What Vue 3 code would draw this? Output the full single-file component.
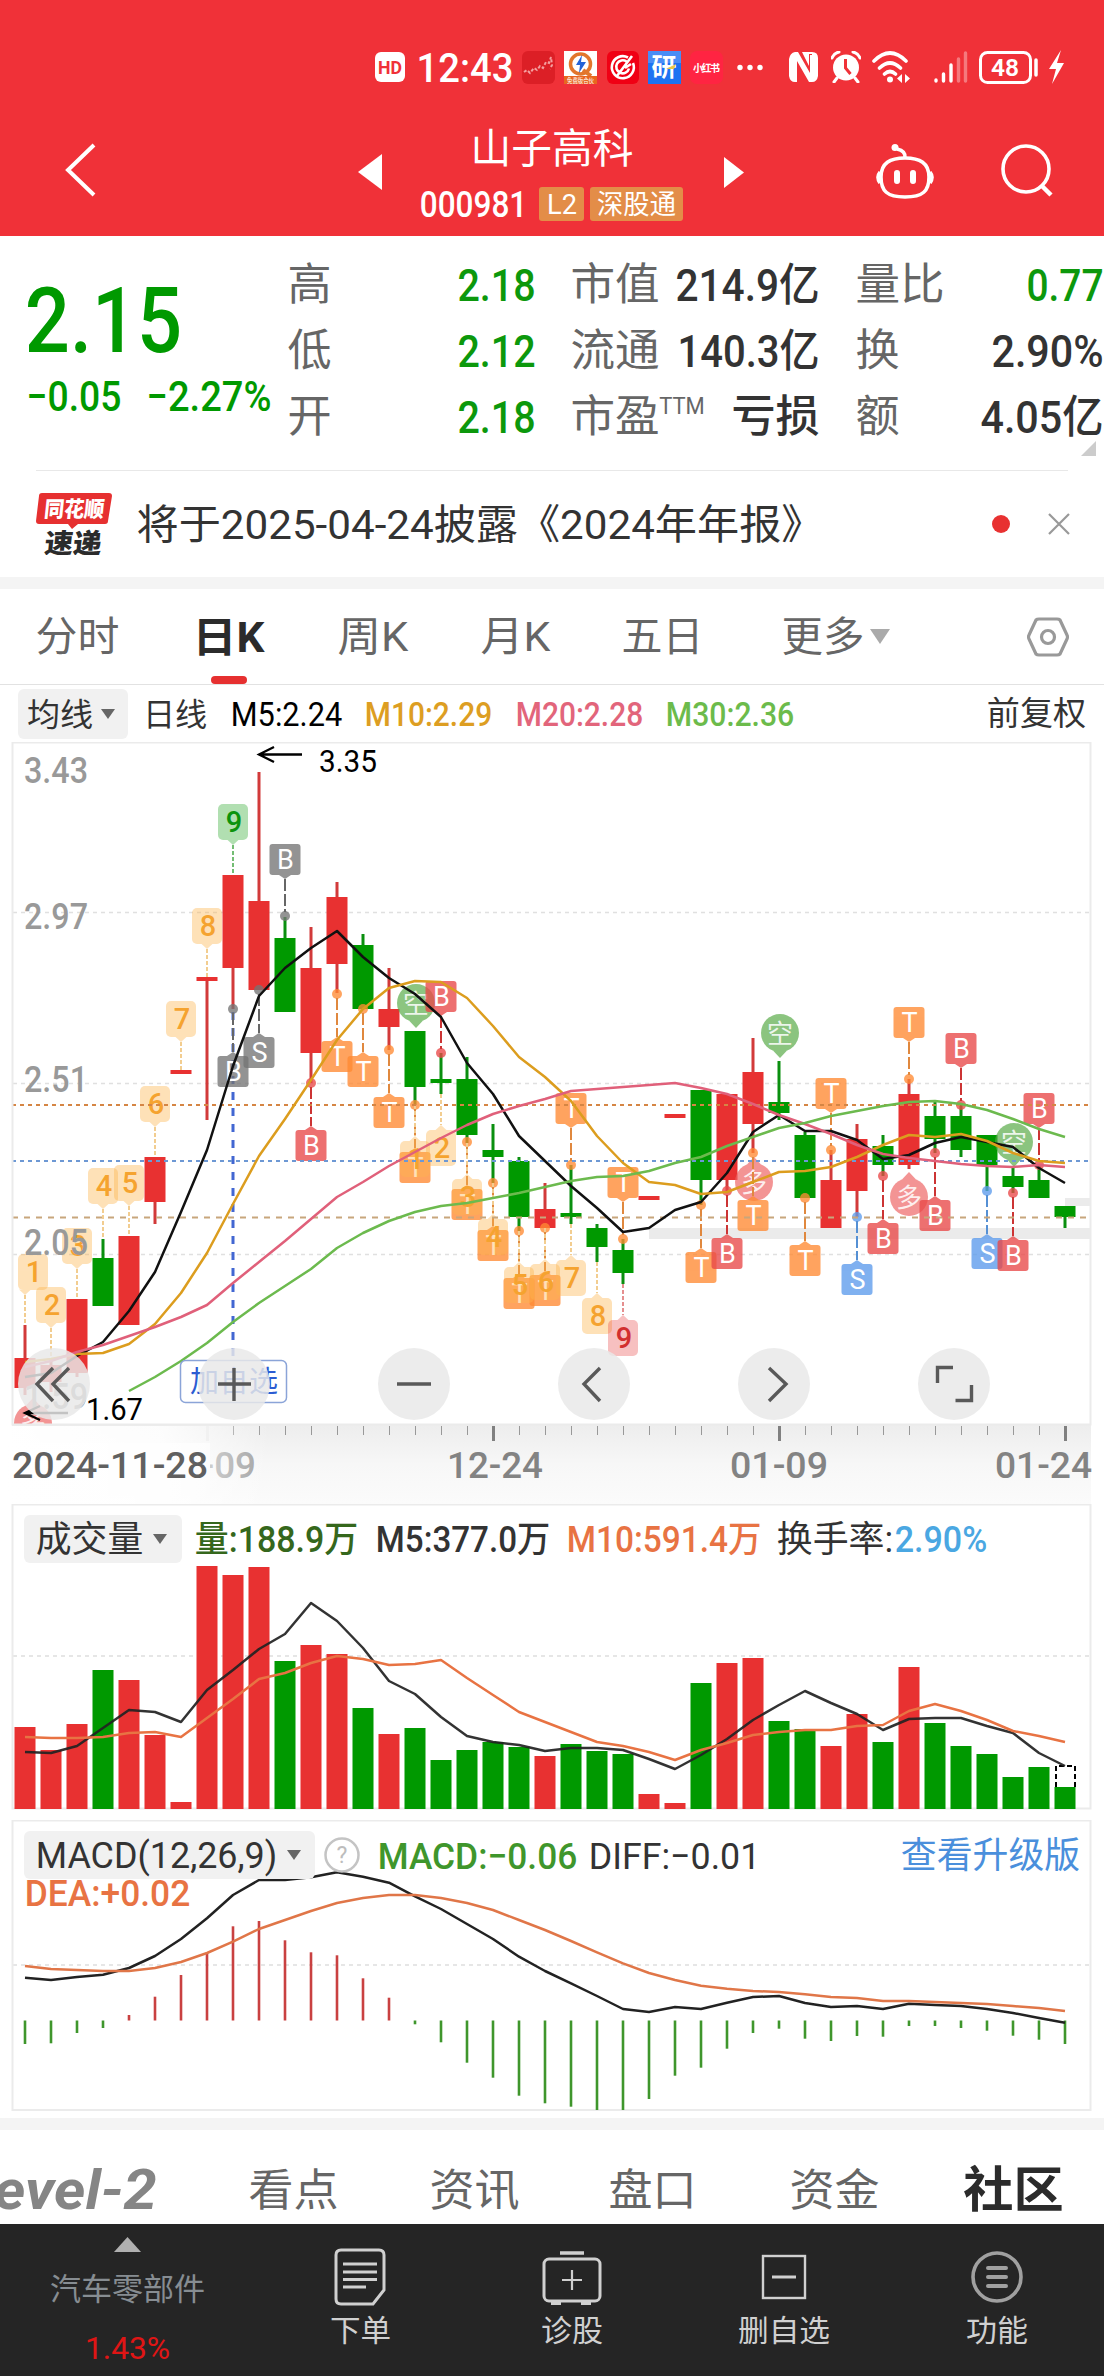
<script setup>
import { h } from 'vue'

// One line of text fitted to an exact width, like the narrow numerals of a trading app
const Fit = (props) => {
  const { t, w, s, b } = props
  return h('svg', { class: 'fit', width: w, height: s, style: { overflow: 'visible', display: 'block', flex: 'none' } }, [
    h('text', {
      x: -0.035 * s, y: 0.86 * s, 'font-size': s, 'font-weight': b || 400,
      textLength: w + 0.07 * s, lengthAdjust: 'spacingAndGlyphs', fill: 'currentColor',
    }, t),
  ])
}
Fit.props = ['t', 'w', 's', 'b']

const X = (i) => 25 + 26 * i
const poly = (arr, start = 0, f = (v) => v) => arr.map((v, i) => `${X(i + start)},${f(v)}`).join(' ')

// [rising?, bodyTop, bodyBottom, high, low]
const candles = [
  [1, 1358, 1388, 1325, 1395], [1, 1365, 1382, 1358, 1392], [1, 1299, 1373, 1299, 1377], [0, 1258, 1306, 1239, 1306],
  [1, 1236, 1325, 1236, 1325], [1, 1157, 1202, 1157, 1224], [1, 1070, 1074, 1070, 1074], [1, 977, 981, 977, 1120],
  [1, 875, 968, 875, 1009], [1, 901, 990, 772, 990], [0, 938, 1012, 917, 1012], [1, 968, 1053, 927, 1083],
  [1, 897, 964, 882, 993], [0, 945, 1009, 934, 1009], [1, 1009, 1027, 968, 1050], [0, 1031, 1087, 1031, 1105],
  [0, 1079, 1083, 1053, 1094], [0, 1079, 1135, 1057, 1143], [0, 1150, 1157, 1124, 1183], [0, 1161, 1217, 1157, 1231],
  [1, 1209, 1228, 1183, 1228], [0, 1213, 1217, 1165, 1224], [0, 1228, 1247, 1224, 1262], [0, 1250, 1273, 1239, 1284],
  [1, 1196, 1200, 1196, 1200], [1, 1114, 1118, 1114, 1118], [0, 1090, 1180, 1090, 1205], [1, 1094, 1180, 1094, 1191],
  [1, 1072, 1124, 1038, 1153], [0, 1102, 1113, 1061, 1120], [0, 1135, 1198, 1132, 1198], [1, 1180, 1228, 1150, 1228],
  [1, 1139, 1191, 1124, 1217], [0, 1146, 1165, 1135, 1176], [1, 1094, 1165, 1079, 1169], [0, 1116, 1139, 1101, 1153],
  [0, 1116, 1150, 1105, 1157], [0, 1135, 1165, 1135, 1191], [0, 1176, 1187, 1167, 1193], [0, 1180, 1198, 1166, 1198],
  [0, 1206, 1217, 1206, 1228],
]
const ma5 = [1377, 1373, 1356, 1342, 1311, 1272, 1212, 1150, 1066, 996, 968, 948, 931, 957, 978, 994, 1017, 1063, 1094, 1136, 1161, 1186, 1208, 1232, 1228, 1210, 1202, 1173, 1132, 1115, 1131, 1131, 1140, 1159, 1155, 1143, 1137, 1142, 1147, 1168, 1183]
const ma10 = [1362, 1359, 1354, 1353, 1344, 1324, 1293, 1253, 1204, 1156, 1119, 1080, 1040, 1009, 988, 981, 982, 998, 1026, 1057, 1077, 1101, 1136, 1163, 1182, 1185, 1194, 1192, 1182, 1172, 1171, 1167, 1157, 1145, 1135, 1137, 1134, 1141, 1153, 1161, 1163]
const ma20 = [1367, 1361, 1352, 1345, 1336, 1327, 1317, 1305, 1283, 1262, 1241, 1219, 1197, 1182, 1166, 1152, 1138, 1125, 1114, 1106, 1099, 1091, 1089, 1087, 1085, 1083, 1088, 1094, 1104, 1115, 1124, 1134, 1145, 1154, 1158, 1161, 1164, 1166, 1167, 1165, 1167]
const ma30 = [1391, 1377, 1361, 1343, 1322, 1303, 1286, 1269, 1248, 1233, 1221, 1212, 1206, 1203, 1198, 1193, 1187, 1181, 1177, 1176, 1171, 1163, 1157, 1146, 1137, 1128, 1123, 1116, 1111, 1106, 1102, 1101, 1104, 1110, 1119, 1129, 1137]

// sequence numbers: [column, label, anchor y, above?, box centre x]
const nums = [
  [0, 1, 1325, 1, 33], [1, 2, 1358, 1, 51], [2, 3, 1299, 1], [3, 4, 1239, 1], [4, 5, 1236, 1], [5, 6, 1157, 1], [6, 7, 1072, 1], [7, 8, 979, 1], [8, 9, 875, 1],
  [15, 1, 1105, 0], [16, 2, 1094, 0], [17, 3, 1143, 0], [18, 4, 1183, 0], [19, 5, 1231, 0], [20, 6, 1228, 0], [21, 7, 1224, 0], [22, 8, 1262, 0], [23, 9, 1284, 0],
].map(([i, t, y, up, cx]) => {
  const x = X(i), c = cx || x, top = up ? y - 71 : y + 36
  const kind = t === 9 ? (up ? 'n-green' : 'n-red') : 'n-orange'
  const tip = up
    ? `${x - 6},${top + 35.5} ${x + 6},${top + 35.5} ${x},${top + 41}`
    : `${x - 6},${top + 0.5} ${x + 6},${top + 0.5} ${x},${top - 5}`
  return { x, c, t, top, kind, tip, y1: up ? top + 41 : y, y2: up ? y : top - 5 }
})

// trade markers: [column, letter, dot y, above?, colour]
const marks = [
  [10, 'B', 916, 1, 'gray'], [8, 'B', 1009, 0, 'gray'], [9, 'S', 990, 0, 'gray'], [11, 'B', 1083, 0, 'red'],
  [12, 'T', 994, 0, 'orange'], [13, 'T', 1009, 0, 'orange'], [14, 'T', 1050, 0, 'orange'], [15, 'T', 1105, 0, 'orange'],
  [16, 'B', 1053, 1, 'red'], [17, 'T', 1142, 0, 'orange'], [18, 'T', 1183, 0, 'orange'], [19, 'T', 1231, 0, 'orange'], [20, 'T', 1228, 0, 'orange'],
  [21, 'T', 1165, 1, 'orange'], [23, 'T', 1239, 1, 'orange'], [26, 'T', 1205, 0, 'orange'], [27, 'B', 1191, 0, 'red'],
  [28, 'T', 1153, 0, 'orange'], [30, 'T', 1198, 0, 'orange'], [31, 'T', 1150, 1, 'orange'], [32, 'S', 1217, 0, 'blue'],
  [33, 'B', 1176, 0, 'red'], [34, 'T', 1079, 1, 'orange'], [35, 'B', 1153, 0, 'red'], [36, 'B', 1105, 1, 'red'],
  [37, 'S', 1191, 0, 'blue'], [38, 'B', 1193, 0, 'red'], [39, 'B', 1165, 1, 'red'],
].map(([i, t, y, up, kind]) => {
  const x = X(i), top = up ? y - 72 : y + 47
  const tip = up
    ? `${x - 6},${top + 31} ${x + 6},${top + 31} ${x},${top + 35}`
    : `${x - 6},${top} ${x + 6},${top} ${x},${top - 4}`
  return { x, t, y, top, kind, tip, y1: up ? top + 35 : y + 4, y2: up ? y - 4 : top - 4 }
})

const pins = [
  { x: 416, y: 1003, t: '空', k: 'p-green', d: 1 }, { x: 780, y: 1033, t: '空', k: 'p-green', d: 1 }, { x: 1014, y: 1142, t: '空', k: 'p-green', d: 1 },
  { x: 754, y: 1182, t: '多', k: 'p-red', d: -1 }, { x: 909, y: 1197, t: '多', k: 'p-red', d: -1 }, { x: 33, y: 1423, t: '多', k: 'p-red', d: -1 },
]
const labels = [['3.43', 783], ['2.97', 929], ['2.51', 1092], ['2.05', 1255], ['1.59', 1409]]
const ticks = Array.from({ length: 33 }, (_, k) => k + 8)
const major = [18, 29, 40]

const vols = [
  [1, 1727], [1, 1750], [1, 1724], [0, 1670], [1, 1680], [1, 1735], [1, 1802], [1, 1566], [1, 1575], [1, 1567], [0, 1661], [1, 1645], [1, 1654], [0, 1708],
  [1, 1734], [0, 1728], [0, 1760], [0, 1750], [0, 1742], [0, 1747], [1, 1756], [0, 1744], [0, 1751], [0, 1754], [1, 1794], [1, 1803], [0, 1683], [1, 1663],
  [1, 1658], [0, 1721], [0, 1729], [1, 1746], [1, 1714], [0, 1742], [1, 1667], [0, 1723], [0, 1746], [0, 1754], [0, 1777], [0, 1767], [0, 1787],
]
const v5 = [1752, 1753, 1746, 1728, 1710, 1712, 1722, 1690, 1670, 1649, 1634, 1603, 1621, 1648, 1681, 1694, 1717, 1736, 1742, 1745, 1751, 1748, 1748, 1750, 1759, 1769, 1755, 1739, 1720, 1705, 1691, 1703, 1714, 1730, 1719, 1718, 1718, 1726, 1733, 1753, 1766]
const v10 = [1737, 1738, 1738, 1737, 1733, 1732, 1737, 1718, 1699, 1679, 1673, 1663, 1656, 1659, 1665, 1664, 1660, 1678, 1695, 1712, 1722, 1732, 1742, 1746, 1752, 1760, 1750, 1743, 1735, 1732, 1730, 1730, 1726, 1725, 1711, 1704, 1711, 1720, 1731, 1736, 1742]

const m3 = (v) => +(1810 + v / 3).toFixed(1)
const macd = [702, 700, 669, 654, 615, 560, 495, 428, 349, 333, 391, 427, 436, 505, 563, 643, 697, 758, 803, 857, 880, 890, 900, 900, 867, 797, 773, 716, 669, 656, 686, 693, 678, 680, 648, 648, 654, 662, 677, 689, 702].map(m3)
const diff = [503, 510, 501, 494, 474, 438, 387, 325, 255, 210, 210, 202, 187, 200, 218, 259, 297, 342, 387, 440, 483, 520, 558, 597, 606, 591, 597, 578, 561, 558, 579, 591, 588, 597, 581, 585, 588, 597, 609, 624, 638]
const dea = [468, 477, 480, 483, 483, 474, 456, 429, 395, 357, 330, 303, 279, 264, 255, 255, 264, 279, 300, 330, 360, 393, 427, 460, 489, 510, 527, 536, 543, 546, 553, 561, 564, 573, 573, 576, 579, 582, 588, 594, 603]
</script>

<template>
  <div class="app">
    <header class="top">
      <div class="status">
        <svg width="30" height="32" viewBox="0 0 30 32"><rect y="1" width="30" height="30" rx="6" fill="#fff" /><text x="3" y="23" font-size="19" font-weight="700" fill="#f03138" textLength="24" lengthAdjust="spacingAndGlyphs">HD</text></svg>
        <Fit t="12:43" :w="94" :s="41" :b="500" />
        <svg width="33" height="33" viewBox="0 0 33 33"><rect width="33" height="33" rx="6" fill="#dc1f26" /><path d="M2 21l3-2 3 3 4-5 3 2 3-4 3 2 3-6 3 1 2-6 1 8-2 4" fill="none" stroke="#f4a0a0" stroke-width="2" stroke-dasharray="3 2" /></svg>
        <svg width="33" height="33" viewBox="0 0 33 33"><rect width="33" height="33" fill="#fff" /><circle cx="16.500" cy="13" r="10" fill="none" stroke="#e2762c" stroke-width="3.500" /><path d="M19 19l8 6" stroke="#e2762c" stroke-width="4" /><path d="M18 4l-6 10h4l-1 8 7-11h-5z" fill="#2463d8" /><rect y="25" width="33" height="8" fill="#e8661f" /><text x="3" y="32" font-size="7" fill="#fff" textLength="27" lengthAdjust="spacingAndGlyphs">免费版合伙</text></svg>
        <svg width="32" height="33" viewBox="0 0 32 33"><rect width="32" height="33" rx="6" fill="#f00014" /><path d="M21 6.500A11 11 0 1 0 26 12M19.500 10.500a6.500 6.500 0 1 0 2.500 7M25 5L10 25M18 17l6-4" fill="none" stroke="#fff" stroke-width="2.600" /></svg>
        <svg width="33" height="33" viewBox="0 0 33 33"><rect width="33" height="33" fill="#1d72f2" /><rect width="33" height="12" fill="#4a8df6" /><text x="3.500" y="25" font-size="25" font-weight="700" fill="#fff">研</text><path d="M18 18l10-5-2 5z" fill="#e9c84a" /></svg>
        <svg width="33" height="33" viewBox="0 0 33 33"><rect width="33" height="33" rx="7" fill="#ff2442" /><text x="3" y="21" font-size="10" font-weight="700" fill="#fff" textLength="27">小红书</text></svg>
        <svg width="26" height="33" viewBox="0 0 26 33"><circle cx="3" cy="16.500" r="2.700" fill="#fff" /><circle cx="13" cy="16.500" r="2.700" fill="#fff" /><circle cx="23" cy="16.500" r="2.700" fill="#fff" /></svg>
        <svg width="29" height="32" viewBox="0 0 29 32"><path d="M6 1h3l12 21V4h2v27h-3L8 10v21H6q-5 0-6-6V8q1-6 6-7z" fill="#fff" /><path d="M13 1h10q6 0 6 6v18q-1 6-6 6V3l-3 0v12z" fill="#fff" /></svg>
        <svg width="30" height="32" viewBox="0 0 30 32"><circle cx="15" cy="16.500" r="13" fill="#fff" /><path d="M1 7q2-5 7-6M29 7q-2-5-7-6M6 27l-3 4M24 27l3 4" stroke="#fff" stroke-width="3" fill="none" stroke-linecap="round" /><path d="M14.500 8v9l5 6" fill="none" stroke="#f03138" stroke-width="3" /></svg>
        <svg width="38" height="33" viewBox="0 0 38 33"><g fill="none" stroke="#fff" stroke-width="3.600" stroke-linecap="round"><path d="M2 10q16-16 32 0M7.500 17q10.500-10 21 0M12.500 23q5.500-5 11 0" /></g><circle cx="18" cy="28.500" r="3" fill="#fff" /><path d="M30 23v9l-5-4.500zM33 23v9l5-4.500z" fill="#fff" /></svg>
        <svg width="34" height="33" viewBox="0 0 34 33"><g stroke="#fff" stroke-width="3.400" stroke-linecap="round"><path d="M2 29v1M9.500 23v7M17 14v16" /><path d="M24.500 8v22M31.500 2v28" opacity=".35" /></g></svg>
        <svg width="59" height="33" viewBox="0 0 59 33"><rect x="1.500" y="1.500" width="50" height="30" rx="7" fill="none" stroke="#fff" stroke-width="3" /><path d="M57 9v15" stroke="#fff" stroke-width="3.500" stroke-linecap="round" /><text x="12" y="25" font-size="24" font-weight="600" fill="#fff" textLength="28" lengthAdjust="spacingAndGlyphs">48</text></svg>
        <svg width="15" height="34" viewBox="0 0 15 34"><path d="M12 0L0 19h7L3 34 15 13H8z" fill="#fff" /></svg>
      </div>
      <div class="nav">
        <svg width="31" height="54" viewBox="0 0 31 54"><path d="M29 2L3 27l26 25" fill="none" stroke="#fff" stroke-width="4" /></svg>
        <svg width="24" height="36" viewBox="0 0 24 36"><path d="M24 0v36L0 18z" fill="#fff" /></svg>
        <div class="title">
          <Fit t="山子高科" :w="160" :s="41" />
          <div class="code">
            <Fit t="000981" :w="105" :s="36" :b="500" />
            <span class="tag l2"><Fit t="L2" :w="28" :s="28" /></span>
            <span class="tag hk"><Fit t="深股通" :w="77" :s="27" /></span>
          </div>
        </div>
        <svg width="20" height="31" viewBox="0 0 20 31"><path d="M0 0v31l20-15.500z" fill="#fff" /></svg>
        <svg width="60" height="56" viewBox="0 0 60 56" fill="none" stroke="#fff" stroke-width="3.600"><path d="M6 34C6 20 15 15 30 15s24 5 24 19-6 20-24 20S6 48 6 34z" /><path d="M30 15q1-7-8-9" /><circle cx="20" cy="4.500" r="3.500" fill="#fff" stroke="none" /><path d="M5 29q-4 5 0 11M55 29q4 5 0 11" /><path d="M22 30v8M38 30v8" stroke-width="6" stroke-linecap="round" /></svg>
        <svg width="54" height="54" viewBox="0 0 54 54" fill="none" stroke="#fff" stroke-width="3.600"><circle cx="25" cy="26" r="23" /><path d="M41 43l9 9" stroke-width="4.500" /></svg>
      </div>
    </header>

    <section class="quote">
      <div class="price">
        <Fit t="2.15" :w="151" :s="91" :b="500" />
        <div class="chg"><Fit t="−0.05" :w="92" :s="42" :b="500" /><Fit t="−2.27%" :w="122" :s="42" :b="500" /></div>
      </div>
      <div class="stats">
        <span class="k"><Fit t="高" :w="41" :s="44" /></span><span class="v g"><Fit t="2.18" :w="75" :s="45" :b="500" /></span>
        <span class="k"><Fit t="市值" :w="86" :s="44" /></span><span class="v"><Fit t="214.9亿" :w="141" :s="45" :b="500" /></span>
        <span class="k"><Fit t="量比" :w="86" :s="44" /></span><span class="v g"><Fit t="0.77" :w="74" :s="45" :b="500" /></span>
        <span class="k"><Fit t="低" :w="41" :s="44" /></span><span class="v g"><Fit t="2.12" :w="75" :s="45" :b="500" /></span>
        <span class="k"><Fit t="流通" :w="86" :s="44" /></span><span class="v"><Fit t="140.3亿" :w="139" :s="45" :b="500" /></span>
        <span class="k"><Fit t="换" :w="41" :s="44" /></span><span class="v"><Fit t="2.90%" :w="109" :s="45" :b="500" /></span>
        <span class="k"><Fit t="开" :w="41" :s="44" /></span><span class="v g"><Fit t="2.18" :w="75" :s="45" :b="500" /></span>
        <span class="k ttm"><Fit t="市盈" :w="86" :s="44" /><Fit t="TTM" :w="44" :s="23" /></span><span class="v"><Fit t="亏损" :w="85" :s="44" :b="500" /></span>
        <span class="k"><Fit t="额" :w="41" :s="44" /></span><span class="v"><Fit t="4.05亿" :w="120" :s="45" :b="500" /></span>
      </div>
      <i class="corner"></i>
    </section>
    <section class="notice">
      <svg width="76" height="62" viewBox="0 0 76 62"><path d="M6 0h67q3 0 3 3l-4 25q0 3-3 3H42l-6 5-4-5H3q-3 0-3-3L3 3q0-3 3-3z" fill="#e63030" /><g transform="skewX(-6)"><text x="10" y="24" font-size="22" font-weight="900" fill="#fff" textLength="60" lengthAdjust="spacingAndGlyphs">同花顺</text><text x="14" y="60" font-size="27" font-weight="900" fill="#2b2b2b" textLength="57" lengthAdjust="spacingAndGlyphs">速递</text></g></svg>
      <Fit t="将于2025-04-24披露《2024年年报》" :w="684" :s="41" />
      <i class="dot"></i>
      <svg width="22" height="22" viewBox="0 0 22 22"><path d="M1 1l20 20M21 1L1 21" stroke="#999" stroke-width="2.200" /></svg>
    </section>
    <div class="band"></div>

    <nav class="tabs">
      <Fit t="分时" :w="81" :s="41" />
      <span class="on"><Fit t="日K" :w="69" :s="42" :b="700" /></span>
      <Fit t="周K" :w="68" :s="41" />
      <Fit t="月K" :w="67" :s="41" />
      <Fit t="五日" :w="79" :s="41" />
      <Fit t="更多" :w="80" :s="41" />
      <svg width="20" height="15" viewBox="0 0 20 15"><path d="M0 0h20L10 15z" fill="#aaa" /></svg>
      <svg width="42" height="40" viewBox="0 0 42 40" fill="none" stroke="#999" stroke-width="3.200"><path d="M12 2h18q2 0 3 1l7 15q1 2 0 4l-7 15q-1 1-3 1H12q-2 0-3-1L2 22q-1-2 0-4L9 3q1-1 3-1z" /><circle cx="21" cy="20" r="6.500" /></svg>
    </nav>

    <div class="legend">
      <span class="pill"><Fit t="均线" :w="64" :s="32" /><i class="arr"></i></span>
      <Fit t="日线" :w="62" :s="32" />
      <Fit class="c5" t="M5:2.24" :w="109" :s="34" />
      <Fit class="c10" t="M10:2.29" :w="125" :s="34" :b="500" />
      <Fit class="c20" t="M20:2.28" :w="125" :s="34" :b="500" />
      <Fit class="c30" t="M30:2.36" :w="126" :s="34" :b="500" />
      <Fit t="前复权" :w="97" :s="33" />
    </div>

    <svg class="kline" width="1104" height="762" viewBox="0 742 1104 762">
      <defs>
        <linearGradient id="ax" x1="0" y1="0" x2="0" y2="1"><stop offset="0" stop-color="#ededed" /><stop offset=".5" stop-color="#f7f7f7" /><stop offset="1" stop-color="#fbfbfb" /></linearGradient>
        <linearGradient id="fade" x1="0" y1="0" x2="1" y2="0"><stop offset="0" stop-color="#fff" /><stop offset=".6" stop-color="#fff" stop-opacity=".85" /><stop offset="1" stop-color="#fff" stop-opacity="0" /></linearGradient>
        <clipPath id="plot"><rect x="12" y="742" width="1080" height="683" /></clipPath>
      </defs>
      <rect x="12" y="1425" width="1079" height="79" fill="url(#ax)" />
      <g stroke="#e0e0e0" stroke-width="1.300" stroke-dasharray="4 4"><path d="M13 912.500H1091M13 1083.500H1091M13 1254.500H1091" /></g>
      <rect x="649" y="1228" width="442" height="11" fill="#ebebeb" />
      <rect x="1065" y="1198" width="26" height="8" fill="#ebebeb" />
      <path d="M233 1012V1360" stroke="#4267d2" stroke-width="3" stroke-dasharray="8 8" />

      <g v-for="(c, i) in candles" :key="i" :class="c[0] ? 'up' : 'dn'">
        <rect :x="X(i) - 1.500" :y="c[3]" width="3" :height="c[4] - c[3]" class="wick" />
        <rect :x="X(i) - 10.500" :y="c[1]" width="21" :height="c[2] - c[1]" />
      </g>

      <g clip-path="url(#plot)">
        <g v-for="(p, i) in pins" :key="'p' + i" :class="p.k">
          <g class="bx"><circle :cx="p.x" :cy="p.y" r="19" /><path :d="`M${p.x - 7} ${p.y + 17.500 * p.d}L${p.x} ${p.y + 25 * p.d}L${p.x + 7} ${p.y + 17.500 * p.d}z`" /></g>
          <text :x="p.x" :y="p.y + 10" text-anchor="middle" font-size="26" fill="#fff" fill-opacity=".85">{{ p.t }}</text>
        </g>
      </g>
      <g v-for="(m, i) in marks" :key="'m' + i" :class="'k-' + m.kind">
        <circle :cx="m.x" :cy="m.y" r="5" class="dt" />
        <path :d="`M${m.x} ${m.y1}V${m.y2}`" class="ln" />
        <g class="bx"><rect :x="m.x - 15.500" :y="m.top" width="31" height="31" rx="3" /><polygon :points="m.tip" /></g>
        <text :x="m.x + 0.500" :y="m.top + 24.500" text-anchor="middle" font-size="27" fill="#fff">{{ m.t }}</text>
      </g>
      <g v-for="(n, i) in nums" :key="'n' + i" :class="n.kind">
        <path :d="`M${n.x} ${n.y1}V${n.y2}`" class="ln" />
        <g class="bx"><rect :x="n.c - 15" :y="n.top" width="30" height="36" rx="5" /><polygon :points="n.tip" /></g>
        <text :x="n.c + 1" :y="n.top + 28" text-anchor="middle" font-size="29" font-weight="500">{{ n.t }}</text>
      </g>
      <text v-for="l in labels" :key="l[0]" x="24" :y="l[1]" font-size="36" font-weight="500" fill="#999" textLength="64" lengthAdjust="spacingAndGlyphs">{{ l[0] }}</text>

      <g stroke-width="2" fill="none">
        <path d="M12 1105H1089" stroke="#d58544" stroke-dasharray="4 4" />
        <path d="M12 1161H1089" stroke="#6d98d4" stroke-dasharray="4 4" />
        <path d="M12 1217.500H1089" stroke="#c8a67c" stroke-dasharray="6 6" />
      </g>
      <g fill="none" stroke-width="2.500" stroke-linejoin="round">
        <polyline :points="poly(ma5)" stroke="#111" />
        <polyline :points="poly(ma10)" stroke="#dc9d1e" />
        <polyline :points="poly(ma20)" stroke="#e0607a" />
        <polyline :points="poly(ma30, 4)" stroke="#6cba4e" />
      </g>

      <g stroke="#000" stroke-width="2.300" fill="none"><path d="M302 754.500H260M274 747l-15 7.500 15 7.500" /><path d="M68 1413H26M40 1406l-15 7 15 7" /></g>
      <text x="319" y="772" font-size="31" textLength="58" lengthAdjust="spacingAndGlyphs">3.35</text>
      <text x="86" y="1420" font-size="31" textLength="57" lengthAdjust="spacingAndGlyphs">1.67</text>

      <rect x="180.500" y="1360.500" width="106" height="42" rx="5" fill="#fff" stroke="#8ba4d8" stroke-width="1.500" />
      <text x="190" y="1392" font-size="29" fill="#2c5cd2" textLength="88">加自选</text>

      <path d="M12.500 1424.500V742.500H1090.500V1424.500z" fill="none" stroke="#ebebeb" stroke-width="2" />

      <g fill="#e8e8e8" fill-opacity=".84"><circle v-for="k in 6" :key="k" :cx="180 * k - 126" cy="1384" r="36" /></g>
      <g fill="none" stroke="#595959" stroke-width="3.400">
        <path d="M53 1368l-16 16 16 17M69 1368l-16 16 16 17" />
        <path d="M218 1384h33M234 1368v33" />
        <path d="M397 1384h34" />
        <path d="M600 1368l-16 16 16 17" />
        <path d="M769 1368l17 16-17 17" />
        <path d="M937.500 1383v-15.500h15.500M955.500 1400.500h16V1385" />
      </g>

      <g stroke="#999" stroke-width="1"><path v-for="t in ticks" :key="t" :d="`M${X(t) + 0.500} 1426v9`" /></g>
      <g stroke="#808080" stroke-width="3"><path v-for="t in major" :key="t" :d="`M${X(t) + 0.500} 1426v15`" /></g>
      <path d="M207.500 1426v15" stroke="#e4e4e4" stroke-width="3" />
      <g font-size="36" font-weight="500" fill="#838383">
        <text x="160" y="1478" textLength="96" lengthAdjust="spacingAndGlyphs" fill="#a0a0a0">12-09</text>
        <text x="447" y="1478" textLength="96" lengthAdjust="spacingAndGlyphs">12-24</text>
        <text x="730" y="1478" textLength="98" lengthAdjust="spacingAndGlyphs">01-09</text>
        <text x="995" y="1478" textLength="97" lengthAdjust="spacingAndGlyphs">01-24</text>
      </g>
      <rect x="0" y="1443" width="210" height="50" fill="#fafafa" />
      <rect x="0" y="1426" width="270" height="78" fill="url(#fade)" />
      <text x="12" y="1478" font-size="36" font-weight="500" fill="#606060" textLength="196" lengthAdjust="spacingAndGlyphs">2024-11-28</text>
    </svg>

    <section class="panel vol">
      <svg class="plot" width="1104" height="316" viewBox="0 1504 1104 316">
        <path d="M13 1656H1091" stroke="#e6e6e6" stroke-width="2" stroke-dasharray="4 4" />
        <rect x="12.500" y="1504.500" width="1078" height="304" fill="none" stroke="#ebebeb" stroke-width="2" />
        <rect v-for="(v, i) in vols" :key="i" :x="X(i) - 10.500" :y="v[1]" width="21" :height="1809 - v[1]" :fill="v[0] ? '#e83131' : '#009900'" />
        <path d="M1056 1787V1766H1075V1787" fill="none" stroke="#000" stroke-width="2" stroke-dasharray="5 3" />
        <g fill="none" stroke-width="2.500" stroke-linejoin="round">
          <polyline :points="poly(v5)" stroke="#222" stroke-opacity=".92" />
          <polyline :points="poly(v10)" stroke="#e87343" />
        </g>
      </svg>
      <div class="head vhead">
        <span class="pill"><Fit t="成交量" :w="105" :s="36" /><i class="arr"></i></span>
        <Fit class="dg" t="量:188.9万" :w="161" :s="36" :b="500" />
        <Fit t="M5:377.0万" :w="172" :s="36" :b="500" />
        <Fit class="or" t="M10:591.4万" :w="192" :s="36" :b="500" />
        <Fit t="换手率:" :w="114" :s="36" />
        <Fit class="bl" t="2.90%" :w="90" :s="36" :b="500" />
      </div>
    </section>

    <section class="panel macd">
      <svg class="plot" width="1104" height="298" viewBox="0 1820 1104 298">
        <path d="M13 1965H1091" stroke="#e6e6e6" stroke-width="2" stroke-dasharray="4 4" />
        <rect x="12.500" y="1820.500" width="1078" height="289.500" fill="none" stroke="#ebebeb" stroke-width="2" />
        <path v-for="(v, i) in macd" :key="i" :d="`M${X(i)} 2020.500V${v}`" :stroke="v < 2020 ? '#c94141' : '#3f962c'" stroke-width="2.600" />
        <g fill="none" stroke-width="2.500" stroke-linejoin="round">
          <polyline :points="poly(diff, 0, m3)" stroke="#222" />
          <polyline :points="poly(dea, 0, m3)" stroke="#e07648" />
        </g>
      </svg>
      <div class="head mhead">
        <span class="pill"><Fit t="MACD(12,26,9)" :w="239" :s="36" /><i class="arr"></i></span>
        <svg width="36" height="36" viewBox="0 0 36 36"><circle cx="18" cy="18" r="16.500" fill="none" stroke="#c4c4c4" stroke-width="2.500" /><text x="18" y="26" text-anchor="middle" font-size="23" fill="#bdbdbd">?</text></svg>
        <Fit class="gr" t="MACD:−0.06" :w="197" :s="37" :b="500" />
        <Fit t="DIFF:−0.01" :w="169" :s="37" />
        <Fit class="lk" t="查看升级版" :w="177" :s="36" />
      </div>
      <div class="dea"><Fit t="DEA:+0.02" :w="163" :s="36" :b="500" /></div>
    </section>
    <div class="band"></div>

    <nav class="subtabs">
      <span class="lv"><Fit t="evel-2" :w="159" :s="55" :b="700" /></span>
      <Fit t="看点" :w="87" :s="44" />
      <Fit t="资讯" :w="87" :s="44" />
      <Fit t="盘口" :w="85" :s="44" />
      <Fit t="资金" :w="87" :s="44" />
      <Fit class="cur" t="社区" :w="97" :s="49" :b="700" />
    </nav>

    <footer class="bar">
      <div class="sector">
        <svg width="27" height="15" viewBox="0 0 27 15"><path d="M13.500 0L27 15H0z" fill="#b0b0b0" /></svg>
        <Fit t="汽车零部件" :w="153" :s="31" />
        <Fit class="pc" t="1.43%" :w="83" :s="32" />
      </div>
      <div class="act">
        <svg width="52" height="58" viewBox="0 0 52 58" fill="none" stroke="#d0d0d0" stroke-width="3"><path d="M7 2h38q5 0 5 5v35L39 56H7q-5 0-5-5V7q0-5 5-5z" /><path d="M9 16h34M9 24h34M9 31.500h34M9 39h23" /></svg>
        <Fit t="下单" :w="59" :s="30" />
      </div>
      <div class="act">
        <svg width="60" height="58" viewBox="0 0 60 58" fill="none" stroke="#d0d0d0" stroke-width="3"><path d="M18 5h24" stroke-width="3.500" /><rect x="2" y="11" width="56" height="42" rx="5" /><path d="M20 32h20M30 22v20" stroke-width="2.200" /><path d="M9 55.500h10M39 55.500h10" /></svg>
        <Fit t="诊股" :w="60" :s="30" />
      </div>
      <div class="act">
        <svg width="46" height="58" viewBox="0 0 46 58" fill="none" stroke="#d0d0d0" stroke-width="2.400"><rect x="2" y="8" width="42" height="42" /><path d="M11 29h24" stroke-width="3" /></svg>
        <Fit t="删自选" :w="90" :s="30" />
      </div>
      <div class="act">
        <svg width="54" height="58" viewBox="0 0 54 58" fill="none" stroke="#a0a0a0"><circle cx="27" cy="29" r="24" stroke-width="3.600" /><path d="M18 20h18M18 29h18M18 38h18" stroke-width="4" stroke-linecap="round" /></svg>
        <Fit t="功能" :w="60" :s="30" />
      </div>
    </footer>
  </div>
</template>

<style>
body { margin: 0; background: #fff; }
</style>

<style scoped>
.app { width: 1104px; height: 2376px; overflow: hidden; background: #fff; color: #333; font-family: Roboto, "Noto Sans CJK SC", sans-serif; }
.app svg { display: block; }
.top { height: 236px; background: #f03138; color: #fff; }
.status { height: 50px; padding: 42px 0 12px 375px; display: grid; grid-template-columns: 43px 104px 42px 43px 41px 42px 47px 52px 42px 41px 62px 45px 70px 15px; align-items: center; }
.nav { height: 104px; padding: 14px 0 0 65px; display: grid; grid-template-columns: 293px 63px 303px 151px 126px 54px; align-items: start; }
.nav > svg { margin-top: 25px; }
.nav > svg:nth-child(2) { margin-top: 36px; }
.nav > svg:nth-child(4) { margin-top: 39px; }
.title { width: 262px; display: flex; flex-direction: column; align-items: center; gap: 18px; padding-top: 10px; }
.code { display: flex; align-items: center; height: 34px; }
.tag { height: 34px; background: #e38d48; border-radius: 3px; display: flex; align-items: center; justify-content: center; }
.l2 { width: 45px; margin-left: 13px; }
.hk { width: 93px; margin-left: 6px; }

.quote { height: 234px; display: flex; position: relative; }
.price { width: 261px; padding: 38px 0 0 28px; color: #009900; display: flex; flex-direction: column; gap: 9px; }
.chg { display: flex; gap: 28px; padding-top: 1px; }
.stats { width: 813px; height: 198px; padding-top: 15px; display: grid; grid-template-columns: 90px 193px 104px 181px 90px 155px; grid-auto-rows: 66px; align-items: center; }
.stats .v { display: flex; justify-content: flex-end; }
.stats .v:nth-child(6n + 2) { padding-right: 38px; }
.stats .v:nth-child(6n + 4) { padding-right: 39px; }
.k { color: #666; }
.g { color: #0c980c; }
.ttm { display: flex; gap: 2px; }
.corner { position: absolute; right: 8px; bottom: 14px; border-left: 15px solid transparent; border-bottom: 15px solid #ccc; }
.notice { height: 106px; margin: 0 36px; border-top: 1px solid #e8e8e8; display: grid; grid-template-columns: 102px 854px 56px 22px; align-items: center; }
.dot { width: 18px; height: 18px; border-radius: 50%; background: #e83131; }
.band { height: 12px; background: #f4f4f4; }

.tabs { height: 95px; border-bottom: 1px solid #e2e2e2; padding-left: 37px; color: #666; display: grid; grid-template-columns: 158px 144px 143px 141px 160px 87px 157px 42px; align-items: center; }
.on { color: #2b2b2b; height: 95px; display: flex; flex-direction: column; width: 67px; align-items: center; }
.on > svg { margin-top: 27px; }
.on::after { content: ""; width: 36px; height: 9px; border-radius: 5px; background: #e63030; margin-top: 18px; }
.legend { height: 57px; padding-left: 18px; display: grid; grid-template-columns: 126px 88px 134px 151px 150px 321px 97px; align-items: center; }
.pill { background: #f1f1f1; border-radius: 6px; display: flex; align-items: center; }
.legend .pill { width: 100px; height: 50px; padding-left: 10px; gap: 9px; }
.arr { border: 7.5px solid transparent; border-top: 10px solid #666; border-bottom: 0; flex: none; }
.c5 { color: #000; } .c10 { color: #dd9e22; } .c20 { color: #e2657b; } .c30 { color: #6cbb4b; }

.up { fill: #e83131; } .dn { fill: #009900; }
.up .wick { fill: #d23a3a; } .dn .wick { fill: #0a8f0f; }
.kline .ln { fill: none; stroke-width: 2; }
.n-orange .bx { fill: #fdb54e; opacity: .4; } .n-orange text { fill: #f5a32f; } .n-orange .ln { stroke: #f2cd90; stroke-dasharray: 4 2; }
.n-green .bx { fill: #009900; opacity: .3; } .n-green text { fill: #0c930c; } .n-green .ln { stroke: #74bd74; stroke-dasharray: 4 2; }
.n-red .bx { fill: #e83131; opacity: .3; } .n-red text { fill: #d22f2f; } .n-red .ln { stroke: #e58f8f; stroke-dasharray: 4 2; }
[class^="k-"] .ln { stroke-dasharray: 12 3; }
[class^="k-"] .bx, [class^="k-"] .dt { opacity: .78; }
.k-gray .bx, .k-gray .dt { fill: #757575; } .k-gray .ln { stroke: #666; }
.k-red .bx, .k-red .dt { fill: #e94848; } .k-red .ln { stroke: #cc3434; }
.k-orange .bx, .k-orange .dt { fill: #ff8a33; } .k-orange .ln { stroke: #e0883e; }
.k-blue .bx, .k-blue .dt { fill: #5c9bec; } .k-blue .ln { stroke: #5590d4; }
.p-green .bx { fill: #55a944; opacity: .68; }
.p-red .bx { fill: #ee6262; opacity: .68; }

.panel { position: relative; }
.plot { position: absolute; left: 0; top: 0; }
.vol { height: 316px; }
.macd { height: 298px; }
.head { position: relative; display: grid; align-items: center; padding: 11px 0 0 24px; height: 48px; }
.vhead { grid-template-columns: 172px 181px 191px 210px 118px 90px; }
.mhead { grid-template-columns: 300px 55px 211px 312px 177px; }
.vhead .pill { width: 145px; height: 48px; padding-left: 13px; gap: 11px; }
.mhead .pill { width: 278px; height: 48px; padding-left: 13px; gap: 11px; }
.dea { position: relative; padding: 0 0 0 26px; margin-top: -4px; color: #e87343; }
.dg { color: #35671c; } .or { color: #e87343; } .bl { color: #4aa7e2; } .gr { color: #3f962c; } .lk { color: #4a8fdc; }

.subtabs { height: 94px; color: #666; display: grid; grid-template-columns: 250px 181px 179px 181px 174px 97px; align-items: center; }
.subtabs > * { margin-top: 25px; }
.lv { color: #858585; font-style: italic; margin-left: -4px; }
.cur { color: #2b2b2b; }
.bar { height: 152px; background: #252525; color: #d0d0d0; display: grid; grid-template-columns: 254px 212px 212px 212px 214px; }
.sector { display: flex; flex-direction: column; align-items: center; color: #878d92; padding-top: 13px; }
.sector .fit:nth-child(2) { margin-top: 21px; }
.pc { margin-top: 27px; color: #e01515; }
.act { display: flex; flex-direction: column; align-items: center; gap: 9px; padding-top: 24px; }
</style>
